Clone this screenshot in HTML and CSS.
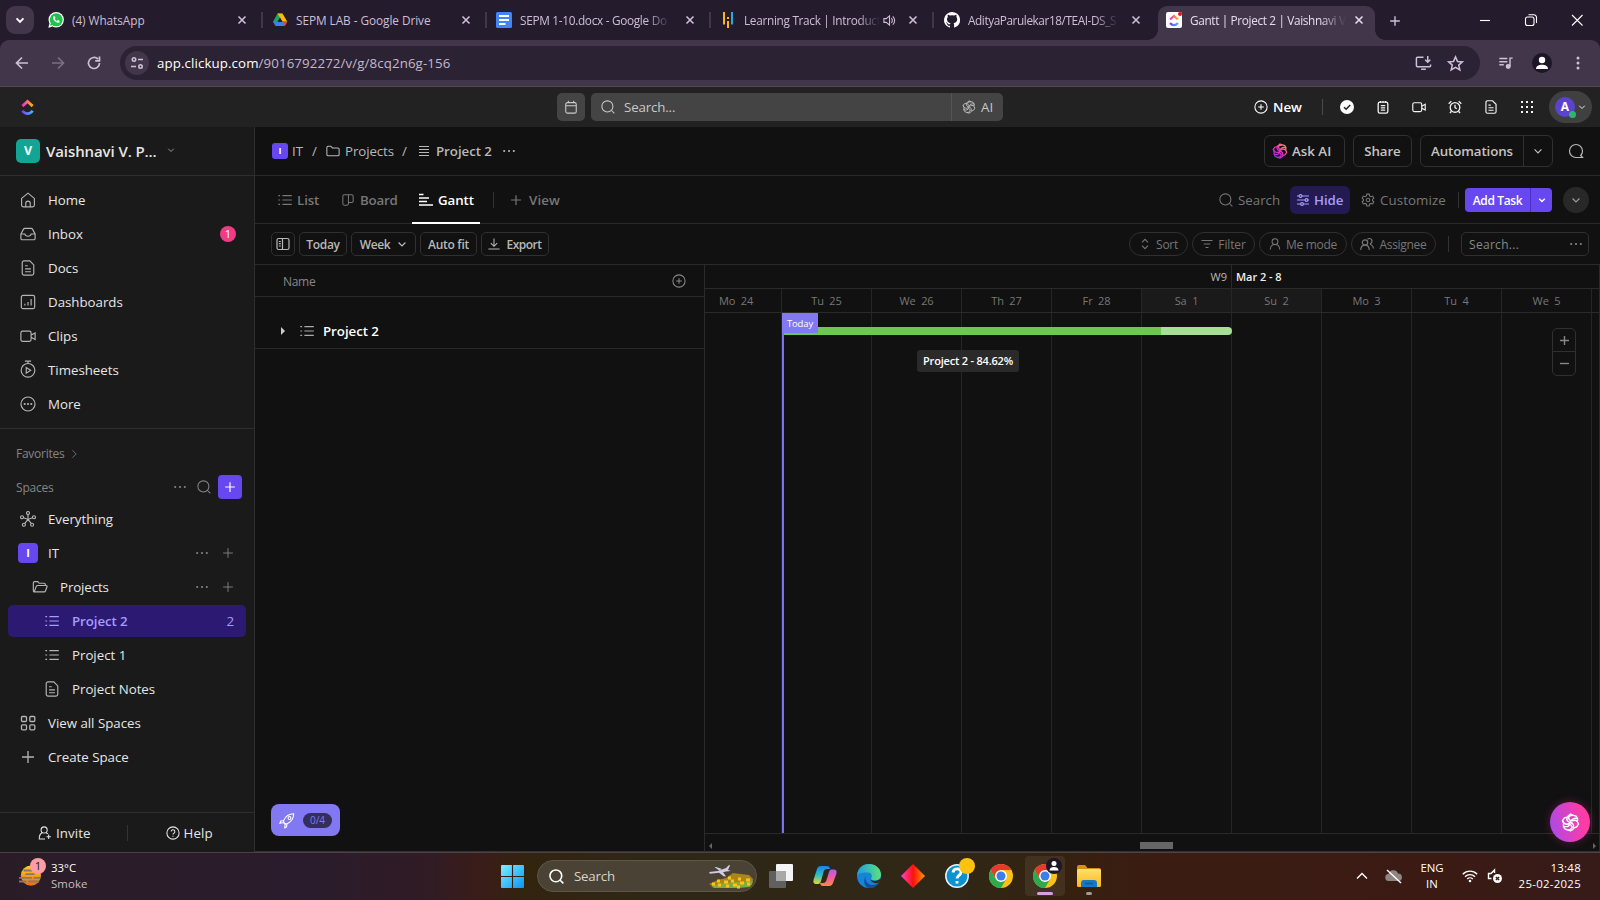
FILE: index.html
```html
<!DOCTYPE html>
<html lang="en">
<head>
<meta charset="utf-8">
<title>Gantt | Project 2</title>
<link rel="stylesheet" href="styles.css">
</head>
<body>
<svg class="sprite" xmlns="http://www.w3.org/2000/svg">
  <defs>
    <linearGradient id="g-up" x1="0" x2="1"><stop offset="0" stop-color="#f02bd6"/><stop offset="1" stop-color="#ffb400"/></linearGradient>
    <linearGradient id="g-down" x1="0" x2="1"><stop offset="0" stop-color="#7b3ff2"/><stop offset="1" stop-color="#42b8ff"/></linearGradient>
    <linearGradient id="g-ai" x1="0" y1="1" x2="1" y2="0"><stop offset="0" stop-color="#8a2bff"/><stop offset=".5" stop-color="#f02bc0"/><stop offset="1" stop-color="#ffa050"/></linearGradient>
    <linearGradient id="g-win" x1="0" y1="0" x2="1" y2="1"><stop offset="0" stop-color="#7df0ff"/><stop offset="1" stop-color="#0a93f5"/></linearGradient>
    <linearGradient id="g-edge" x1="0" y1="0" x2="1" y2="0"><stop offset="0" stop-color="#1b9de2"/><stop offset="1" stop-color="#5fe07a"/></linearGradient>
    <linearGradient id="g-dia" x1="0" x2="1"><stop offset="0" stop-color="#ff45c8"/><stop offset=".5" stop-color="#ff1010"/><stop offset="1" stop-color="#ff9a00"/></linearGradient>
    <linearGradient id="g-cop1" x1="0" y1="0" x2="0" y2="1"><stop offset="0" stop-color="#1c7ff0"/><stop offset=".5" stop-color="#2cc0c8"/><stop offset="1" stop-color="#f2d22e"/></linearGradient>
    <linearGradient id="g-cop2" x1="0" y1="0" x2="0" y2="1"><stop offset="0" stop-color="#b05cf0"/><stop offset=".5" stop-color="#f05ca0"/><stop offset="1" stop-color="#ff8a3c"/></linearGradient>
    <linearGradient id="g-smoke" x1="0" y1="0" x2="0" y2="1"><stop offset="0" stop-color="#ffd21c"/><stop offset="1" stop-color="#f06a10"/></linearGradient>
    <linearGradient id="g-fold" x1="0" y1="0" x2="0" y2="1"><stop offset="0" stop-color="#ffdf6b"/><stop offset="1" stop-color="#f8b81e"/></linearGradient>
  </defs>
  <symbol id="x" viewBox="0 0 16 16"><path d="M4.500 4.500l7 7M11.500 4.500l-7 7"/></symbol>
  <symbol id="plus" viewBox="0 0 16 16"><path d="M8 1.500v13M1.500 8h13"/></symbol>
  <symbol id="minus" viewBox="0 0 16 16"><path d="M1.500 8h13"/></symbol>
  <symbol id="down" viewBox="0 0 16 16"><path d="M2.500 5.500L8 11l5.500-5.500"/></symbol>
  <symbol id="right" viewBox="0 0 16 16"><path d="M5.500 2l6 6-6 6"/></symbol>
  <symbol id="dots" viewBox="0 0 16 16"><g fill="currentColor" stroke="none"><circle cx="2.500" cy="8" r="1.200"/><circle cx="8" cy="8" r="1.200"/><circle cx="13.500" cy="8" r="1.200"/></g></symbol>
  <symbol id="search" viewBox="0 0 16 16"><circle cx="7.300" cy="7.300" r="6.300"/><path d="M12 12l3.300 3.300"/></symbol>
  <symbol id="pluscircle" viewBox="0 0 16 16"><circle cx="8" cy="8" r="7"/><path d="M8 4.800v6.400M4.800 8h6.400"/></symbol>
  <symbol id="home" viewBox="0 0 18 18"><path d="M1.800 7.200L9 1.300l7.200 5.900v7.500a2 2 0 0 1-2 2H3.800a2 2 0 0 1-2-2zM6.500 16.500v-3.800a2.500 2.500 0 0 1 5 0v3.800"/></symbol>
  <symbol id="inbox" viewBox="0 0 18 18"><path d="M1 9l3-5.500a1.500 1.500 0 0 1 1.300-.8h7.400a1.500 1.500 0 0 1 1.300.8L17 9v5a1.500 1.500 0 0 1-1.500 1.500h-13A1.500 1.500 0 0 1 1 14zM1 9h4.500c.3 1.700 1.500 2.500 3.500 2.500s3.200-.8 3.500-2.500H17"/></symbol>
  <symbol id="doc" viewBox="0 0 18 18"><path d="M4.500 1H11l4.500 4.500v9.500a2 2 0 0 1-2 2h-9a2 2 0 0 1-2-2V3a2 2 0 0 1 2-2zM5.700 6.500h3M5.700 10h6.600M5.700 13.200h6.600"/></symbol>
  <symbol id="dash" viewBox="0 0 18 18"><rect x="1.500" y="1.500" width="15" height="15" rx="2"/><path d="M5.500 13v-2M9 13V9M12.500 13V5.500"/></symbol>
  <symbol id="video" viewBox="0 0 18 18"><rect x="1" y="3.500" width="11.500" height="11.500" rx="2"/><path d="M12.500 8l4.500-2.500v7.500l-4.500-2.500"/></symbol>
  <symbol id="timer" viewBox="0 0 18 20"><circle cx="9" cy="11.500" r="7.700"/><path d="M5.500 1.200h7M9 1.200V4M7 8.300v6.400l5-3.200z"/></symbol>
  <symbol id="more" viewBox="0 0 18 18"><circle cx="9" cy="9" r="7.900"/><g fill="currentColor" stroke="none"><circle cx="5.300" cy="9" r="1.200"/><circle cx="9" cy="9" r="1.200"/><circle cx="12.700" cy="9" r="1.200"/></g></symbol>
  <symbol id="every" viewBox="0 0 18 18"><circle cx="9" cy="2.300" r="1.700"/><circle cx="2.300" cy="7" r="1.700"/><circle cx="15.700" cy="7" r="1.700"/><circle cx="4.400" cy="15.500" r="1.700"/><circle cx="13.600" cy="15.500" r="1.700"/><path d="M9 4v5.500M4 7.600l5 1.900 5-1.900M5.400 14L9 9.500l3.600 4.500"/></symbol>
  <symbol id="folder" viewBox="0 0 16 16"><path d="M1 4a1.500 1.500 0 0 1 1.500-1.500h3L7.300 4.500h6.200A1.500 1.500 0 0 1 15 6v6a1.500 1.500 0 0 1-1.500 1.500h-11A1.500 1.500 0 0 1 1 12z"/></symbol>
  <symbol id="folderopen" viewBox="0 0 18 16"><path d="M2.500 13.500A1.500 1.500 0 0 1 1.500 12V3.500A1.500 1.500 0 0 1 3 2h3.500L8 3.800h5.500A1.500 1.500 0 0 1 15 5.300v1M2.500 13.500h11.200a1.500 1.500 0 0 0 1.400-1l1.900-5a1 1 0 0 0-1-1.200H6.200a1.500 1.500 0 0 0-1.400 1z"/></symbol>
  <symbol id="list" viewBox="0 0 16 16"><path d="M5 3h10.800M5 8h10.800M5 13h10.800M.4 3h2M.4 8h2M.4 13h2"/></symbol>
  <symbol id="lines" viewBox="0 0 12 12"><path d="M1 2.500h10M1 5.500h10M1 8.500h10M1 11.500h10"/></symbol>
  <symbol id="grid4" viewBox="0 0 16 16"><rect x="1.500" y="1.500" width="5" height="5" rx="1"/><rect x="9.800" y="1.500" width="5" height="5" rx="1"/><rect x="1.500" y="9.800" width="5" height="5" rx="1"/><rect x="9.800" y="9.800" width="5" height="5" rx="1"/></symbol>
  <symbol id="invite" viewBox="0 0 16 16"><circle cx="7" cy="4.500" r="3.500"/><path d="M5 7.500C2.500 9 1.200 11.500 1.500 14.800H8M9.300 7.700l2 1.300M12.200 9.800v5M9.700 12.300h5"/></symbol>
  <symbol id="help" viewBox="0 0 16 16"><circle cx="8" cy="8" r="7"/><path d="M5.900 6.300a2.100 2.100 0 1 1 3.100 1.900c-.8.400-1 .8-1 1.400M8 11.200v1.200"/></symbol>
  <symbol id="board" viewBox="0 0 14 14"><path d="M2.500 1h9A1.500 1.500 0 0 1 13 2.500v6A1.500 1.500 0 0 1 11.500 10H7.500v1.500A1.500 1.500 0 0 1 6 13H2.500A1.500 1.500 0 0 1 1 11.500v-9A1.500 1.500 0 0 1 2.500 1zM7.500 1v9"/></symbol>
  <symbol id="gantt" viewBox="0 0 14 14"><path d="M0 1.500h4.500M0 5h10M0 8.500h8M0 12h14"/></symbol>
  <symbol id="panel" viewBox="0 0 14 14"><rect x="1" y="1.500" width="12" height="11" rx="1.500"/><path d="M6.500 1.500V12.500M2.800 4.500h2M2.800 6.700h2M2.800 9h2"/></symbol>
  <symbol id="export" viewBox="0 0 14 14"><path d="M7 .5v9M3.300 6L7 9.700 10.700 6M.5 12.800h13"/></symbol>
  <symbol id="sort" viewBox="0 0 14 14"><path d="M3.500 5L7 1.500 10.500 5M3.500 9L7 12.500 10.500 9"/></symbol>
  <symbol id="filter" viewBox="0 0 14 14"><path d="M.500 3h13M3.200 7h7.600M5.300 11h3.400"/></symbol>
  <symbol id="person" viewBox="0 0 14 14"><circle cx="7" cy="4.300" r="3.400"/><path d="M1.500 13.500c.2-3.700 2.200-5.800 5.500-5.800s5.300 2.100 5.500 5.800"/></symbol>
  <symbol id="people" viewBox="0 0 14 14"><circle cx="5" cy="5.500" r="2.700"/><path d="M.7 13c.2-3 1.600-4.800 4.300-4.800S9.100 10 9.300 13M7.500 2.200A2.700 2.700 0 1 1 10 6.800M10 7.500c2 .3 3.200 1.800 3.400 4"/></symbol>
  <symbol id="sliders" viewBox="0 0 14 14"><path d="M1 3h2M6 3h7M1 7h8M12 7h1M1 11h3.500M7.500 11H13"/><circle cx="4.500" cy="3" r="1.400"/><circle cx="10.500" cy="7" r="1.400"/><circle cx="6" cy="11" r="1.400"/></symbol>
  <symbol id="gear" viewBox="0 0 16 16"><path d="M6.600 1.300h2.800l.4 2 1.600.9 1.900-.7 1.400 2.500-1.500 1.300v1.500l1.500 1.300-1.400 2.400-1.900-.6-1.600.9-.4 2H6.600l-.4-2-1.600-.9-1.900.6L1.300 10l1.500-1.200V7.300L1.300 6l1.400-2.500 1.900.7 1.600-.9z"/><circle cx="8" cy="8" r="2"/></symbol>
  <symbol id="chat" viewBox="0 0 16 16"><path d="M14.500 14.500H8A6.500 6.500 0 1 1 14.500 8a6.500 6.500 0 0 1-1.800 4.500z"/></symbol>
  <symbol id="ai" viewBox="0 0 16 16"><path d="M8 1l2.400 1 2.300.6 1.300 2.200-.3 2.400 1 2.100-1.300 2.200-2.200 1-2 1.900L8 15l-2.600-.7-2.200-1L2 11l.3-2.300L1.300 6.300l1.500-2.100 2.400-.7z"/><path d="M10.400 2C6 2 5.300 4.500 8 6.500M5.200 3.500c-1 3 1 4 2.800 4.500 2 .6 3.300 2 2.200 4.500M14 4.800C12 4 8.500 4.300 8 8M1.300 6.300c.8 3 4 4.300 6.700 1.700M5.400 14.300c3.800 0 4.800-2 2.600-4.600M2 11c3 1 5 .6 5.500-2M13.700 7.200c-1.500-1.500-3.400-1.300-4.500-.2"/></symbol>
  <symbol id="cal" viewBox="0 0 16 16"><rect x="2" y="3" width="12" height="12" rx="2"/><path d="M2 6.500h12M5 .8v2.200M11 .8v2.200"/></symbol>
  <symbol id="note" viewBox="0 0 16 16"><rect x="2.500" y="2.500" width="11" height="12.500" rx="2"/><path d="M5 1v2M8 1v2M11 1v2M5.500 6.500h5M5.500 9h5M5.500 11.500h5"/></symbol>
  <symbol id="alarm" viewBox="0 0 16 16"><circle cx="8" cy="8.500" r="5.500"/><path d="M8 5.500v3.200l2 1.300M.8 4.200l3-2.800M15.200 4.200l-3-2.800M4 12.800l-1.800 2M12 12.800l1.800 2"/></symbol>
  <symbol id="logo" viewBox="0 0 14 18"><path d="M1.500 7.500L7 2.500l5.500 5" fill="none" stroke="url(#g-up)" stroke-width="3"/><path d="M1.500 12.500c3 4 8 4 11 0" fill="none" stroke="url(#g-down)" stroke-width="3"/></symbol>
  <symbol id="chrome" viewBox="0 0 24 24"><g stroke="none"><circle cx="12" cy="12" r="12" fill="#fbc116"/><circle cx="12" cy="12" r="6" fill="#fff"/><circle cx="12" cy="12" r="4.500" fill="#3b7de9"/><path d="M12 6h10.400A12 12 0 0 0 12 0 12 12 0 0 0 1.600 6l5.200 9A6 6 0 0 1 12 6z" fill="#e33b2e"/><path d="M1.600 6A12 12 0 0 0 12 24l5.200-9A6 6 0 0 1 6.800 15z" fill="#2da94f"/></g></symbol>
</svg>

<div class="tabs">
  <div class="tabsearch"><svg class="i10 w3"><use href="#down"/></svg></div>
  <div class="tab">
    <svg class="fav" viewBox="0 0 16 16"><circle cx="8.200" cy="7.800" r="7.700" fill="#fff"/><path d="M.3 15.700l1-4 3 3z" fill="#fff"/><circle cx="8.200" cy="7.800" r="6.500" fill="#1fc34a"/><path d="M2.200 13.800l.8-3 2 2z" fill="#1fc34a"/><path d="M5.400 4.500c-1.500 2.500 3 7.500 6 6l.3-1.500-1.800-.9-.9.900C8 8.600 7.200 7.700 6.800 6.900l.7-.9-.7-1.700z" fill="#fff"/></svg>
    <span class="ttl">(4) WhatsApp</span><svg class="tx"><use href="#x"/></svg><i class="sep"></i>
  </div>
  <div class="tab">
    <svg class="fav" viewBox="0 0 16 16"><path d="M5.500 1.500h5L8 5.800 3.700 13.500 1 9.800z" fill="#1ea55a"/><path d="M5.500 1.500h5l4.800 8.200h-4.800z" fill="#fbbc05"/><path d="M1 9.800h14.300L12.600 14H3.500z" fill="#3f7ef0"/><path d="M10.800 9.800h4.500L12.800 14z" fill="#ea4335"/><path d="M8 6l2.200 3.800H5.800z" fill="#241b2d"/></svg>
    <span class="ttl">SEPM LAB - Google Drive</span><svg class="tx"><use href="#x"/></svg><i class="sep"></i>
  </div>
  <div class="tab">
    <svg class="fav" viewBox="0 0 16 16"><rect width="16" height="16" rx="1.500" fill="#4285f4"/><path d="M3 4h10M3 8h10M3 12h6.500" stroke="#fff" stroke-width="1.800"/></svg>
    <span class="ttl fade">SEPM 1-10.docx - Google Do</span><svg class="tx"><use href="#x"/></svg><i class="sep"></i>
  </div>
  <div class="tab">
    <svg class="fav" viewBox="0 0 16 16"><path d="M4 0v12.500M8 9v7" stroke="#fcb614" stroke-width="2"/><path d="M8 5v2" stroke="#fcb614" stroke-width="2"/><path d="M12 0v12.500" stroke="#28a9e0" stroke-width="2"/></svg>
    <span class="ttl fade short">Learning Track | Introduct</span>
    <svg class="spk" viewBox="0 0 14 14"><path d="M1 5h2.500L7 2v10L3.500 9H1zM9 4.500a3.500 3.500 0 0 1 0 5M10.500 2.500a6 6 0 0 1 0 9"/></svg>
    <svg class="tx"><use href="#x"/></svg><i class="sep"></i>
  </div>
  <div class="tab last">
    <svg class="fav" viewBox="0 0 16 16"><path fill="#fff" d="M8 0a8 8 0 0 0-2.500 15.600c.4.100.5-.2.500-.4v-1.500c-2 .4-2.600-.9-2.800-1.500-.1-.3-.5-1-.8-1.200-.3-.1-.7-.5 0-.5s1.100.6 1.300.9c.7 1.200 1.900.9 2.400.7.1-.5.300-.9.500-1.100-1.800-.2-3.600-.9-3.600-4 0-.9.300-1.600.8-2.100 0-.200-.4-1 .1-2.100 0 0 .7-.2 2.200.8a7.500 7.500 0 0 1 4 0c1.500-1 2.200-.8 2.200-.8.400 1.100.2 1.900.1 2.100.5.600.8 1.300.8 2.100 0 3.100-1.900 3.800-3.700 4 .3.200.6.700.6 1.500v2.700c0 .2.100.5.500.4A8 8 0 0 0 8 0z"/></svg>
    <span class="ttl fade">AdityaParulekar18/TEAI-DS_S</span><svg class="tx"><use href="#x"/></svg>
  </div>
  <div class="tab active">
    <span class="favbox"><svg class="favlogo"><use href="#logo"/></svg><i class="reddot"></i></span>
    <span class="ttl fade lit">Gantt | Project 2 | Vaishnavi V</span><svg class="tx"><use href="#x"/></svg>
  </div>
  <svg class="newtab w15" viewBox="0 0 16 16"><path d="M8 2.500v11M2.500 8h11"/></svg>
  <svg class="wc" viewBox="0 0 14 14"><path d="M2 7.500h10"/></svg>
  <svg class="wc" viewBox="0 0 14 14"><rect x="1.500" y="4" width="8.500" height="8.500" rx="2"/><path d="M4.500 1.800H10A2.500 2.500 0 0 1 12.500 4.300V10"/></svg>
  <svg class="wc" viewBox="0 0 14 14"><path d="M2 2l10.500 10.500M12.500 2L2 12.500"/></svg>
</div>

<div class="toolwrap"><div class="tool">
  <svg class="nav" viewBox="0 0 16 16"><path d="M14 8H3M8 2.500L2.500 8 8 13.500"/></svg>
  <svg class="nav dim" viewBox="0 0 16 16"><path d="M2 8h11M8 2.500L13.500 8 8 13.500"/></svg>
  <svg class="nav" viewBox="0 0 16 16"><path d="M13.500 8A5.500 5.500 0 1 1 12 4.200M13.500 1.500v4.300H9.200"/></svg>
  <div class="omni">
    <span class="site"><svg class="i16" viewBox="0 0 16 16"><circle cx="5" cy="4.500" r="1.700"/><path d="M9 4.500h5M2 11.500h5"/><circle cx="11.500" cy="11.500" r="1.700"/></svg></span>
    <span class="url"><em>app.clickup.com</em>/9016792272/v/g/8cq2n6g-156</span>
    <svg class="oi" viewBox="0 0 18 18"><path d="M9 2.500H2.500A1 1 0 0 0 1.500 3.500v8a1 1 0 0 0 1 1h13a1 1 0 0 0 1-1V10M6.500 15.200h5M13.500 1v6.500M10.800 5l2.700 2.700L16.200 5"/></svg>
    <svg class="oi" viewBox="0 0 18 18"><path d="M9 2l2.100 4.800 5.200.5-3.900 3.400 1.200 5.100L9 13.100l-4.600 2.700 1.200-5.100L1.700 7.300l5.200-.5z"/></svg>
  </div>
  <svg class="media" viewBox="0 0 18 18"><path d="M1.500 4h9M1.500 7.500h9M1.500 11h5M13.500 13V3.500h3"/><circle cx="11.500" cy="13" r="2" fill="currentColor"/></svg>
  <span class="prof"><svg viewBox="0 0 20 20"><circle cx="10" cy="7" r="3.200" fill="#fff"/><path d="M4 16c0-3 3-4.300 6-4.300s6 1.300 6 4.300z" fill="#fff"/></svg></span>
  <svg class="kebab" viewBox="0 0 16 16"><g fill="currentColor" stroke="none"><circle cx="8" cy="3" r="1.500"/><circle cx="8" cy="8" r="1.500"/><circle cx="8" cy="13" r="1.500"/></g></svg>
</div></div>

<header class="top">
  <svg class="cu"><use href="#logo"/></svg>
  <span class="calbtn"><svg class="i14"><use href="#cal"/></svg></span>
  <div class="gsearch"><svg class="i14"><use href="#search"/></svg><span class="gs">Search...</span><span class="gai"><svg class="i14 w1"><use href="#ai"/></svg>AI</span></div>
  <div class="new"><svg class="i14"><use href="#pluscircle"/></svg><b>New</b></div>
  <i class="vbar"></i>
  <div class="quick">
    <svg class="i16" viewBox="0 0 16 16"><circle cx="8" cy="8" r="7" fill="#fff" stroke="none"/><path d="M5 8.200l2.200 2.100L11.200 6" stroke="#222"/></svg>
    <svg class="i14"><use href="#note"/></svg><svg class="i14"><use href="#video"/></svg><svg class="i14"><use href="#alarm"/></svg><svg class="i14"><use href="#doc"/></svg>
    <svg class="i14" viewBox="0 0 14 14"><path stroke-width="2.200" stroke-dasharray="2 3" d="M1 2h13M1 7h13M1 12h13"/></svg>
  </div>
  <div class="me"><span class="ava">A<i></i></span><svg class="i8 w2"><use href="#down"/></svg></div>
</header>

<div class="app">
<aside class="side">
  <div class="ws"><span class="wsa">V</span><b>Vaishnavi V. P...</b><svg class="i8 w2"><use href="#down"/></svg></div>
  <nav class="menu">
    <div class="row"><svg><use href="#home"/></svg><span>Home</span></div>
    <div class="row"><svg><use href="#inbox"/></svg><span>Inbox</span><i class="cnt">1</i></div>
    <div class="row"><svg><use href="#doc"/></svg><span>Docs</span></div>
    <div class="row"><svg><use href="#dash"/></svg><span>Dashboards</span></div>
    <div class="row"><svg><use href="#video"/></svg><span>Clips</span></div>
    <div class="row"><svg class="tall"><use href="#timer"/></svg><span>Timesheets</span></div>
    <div class="row"><svg><use href="#more"/></svg><span>More</span></div>
  </nav>
  <div class="fav-h">Favorites<svg class="i10"><use href="#right"/></svg></div>
  <div class="sp-h"><span>Spaces</span><svg class="i14"><use href="#dots"/></svg><svg class="i14"><use href="#search"/></svg><span class="addsp"><svg class="i12 w15"><use href="#plus"/></svg></span></div>
  <nav class="spaces">
    <div class="row"><svg><use href="#every"/></svg><span>Everything</span></div>
    <div class="row"><i class="itb">I</i><span>IT</span><svg class="a i14"><use href="#dots"/></svg><svg class="a i12"><use href="#plus"/></svg></div>
    <div class="row l1"><svg class="fo"><use href="#folderopen"/></svg><span>Projects</span><svg class="a i14"><use href="#dots"/></svg><svg class="a i12"><use href="#plus"/></svg></div>
    <div class="row l2 sel"><svg class="i14"><use href="#list"/></svg><span>Project 2</span><em>2</em></div>
    <div class="row l2"><svg class="i14"><use href="#list"/></svg><span>Project 1</span></div>
    <div class="row l2"><svg class="i16"><use href="#doc"/></svg><span>Project Notes</span></div>
    <div class="row"><svg class="i16 va"><use href="#grid4"/></svg><span>View all Spaces</span></div>
    <div class="row"><svg class="i16 va" viewBox="0 0 16 16"><path d="M8 2v12M2 8h12"/></svg><span>Create Space</span></div>
  </nav>
  <div class="sfoot"><div><svg class="i14"><use href="#invite"/></svg>Invite</div><i></i><div><svg class="i14"><use href="#help"/></svg>Help</div></div>
</aside>

<main class="main">
  <div class="bar crumbs">
    <i class="itb sm">I</i><span class="c-it">IT</span><span class="sl">/</span><svg class="i14 c-f"><use href="#folder"/></svg><span class="c-p">Projects</span><span class="sl sl2">/</span><svg class="c-l"><use href="#lines"/></svg><b class="c-2">Project 2</b><svg class="i14 c-d"><use href="#dots"/></svg>
    <div class="btn ask"><svg class="aic"><use href="#ai"/></svg>Ask AI</div>
    <div class="btn share">Share</div>
    <div class="btn auto"><span>Automations</span><i><svg class="i10"><use href="#down"/></svg></i></div>
    <svg class="i16 chat"><use href="#chat"/></svg>
  </div>
  <div class="bar views">
    <div class="v v1"><svg class="i14"><use href="#list"/></svg>List</div>
    <div class="v v2"><svg class="i12"><use href="#board"/></svg>Board</div>
    <div class="v v3"><svg class="i14"><use href="#gantt"/></svg>Gantt</div>
    <i class="vb"></i>
    <div class="v v4"><svg class="i12"><use href="#plus"/></svg>View</div>
    <div class="r vs"><svg class="i14"><use href="#search"/></svg>Search</div>
    <div class="hide"><svg class="i14"><use href="#sliders"/></svg>Hide</div>
    <div class="r cz"><svg class="i14"><use href="#gear"/></svg>Customize</div>
    <i class="vb2"></i>
    <div class="addt"><span>Add Task</span><i><svg class="i8 w3"><use href="#down"/></svg></i></div>
    <span class="circ"><svg class="i10 w2"><use href="#down"/></svg></span>
  </div>
  <div class="bar filters">
    <div class="fb f1"><svg class="i14"><use href="#panel"/></svg></div><div class="fb f2">Today</div><div class="fb f3">Week<svg class="i10 w2"><use href="#down"/></svg></div><div class="fb f4">Auto fit</div><div class="fb f5"><svg class="i12"><use href="#export"/></svg>Export</div>
    <div class="pill p1"><svg class="i12"><use href="#sort"/></svg>Sort</div><div class="pill p2"><svg class="i12"><use href="#filter"/></svg>Filter</div><div class="pill p3"><svg class="i12"><use href="#person"/></svg>Me mode</div><div class="pill p4"><svg class="i14"><use href="#people"/></svg>Assignee</div>
    <i class="vb3"></i>
    <div class="fs"><span>Search...</span><svg class="i14"><use href="#dots"/></svg></div>
  </div>
  <div class="gantt">
    <div class="left">
      <div class="nh"><span>Name</span><svg class="i14"><use href="#pluscircle"/></svg></div>
      <div class="nr"><i class="tri"></i><svg class="i14"><use href="#list"/></svg><b>Project 2</b></div>
    </div>
    <div class="time">
      <div class="weeks"><span class="wk9">W9</span><span class="wk10">Mar 2 - 8</span></div>
      <div class="days"><span class="d0">Mo&nbsp; 24</span><span>Tu&nbsp; 25</span><span>We&nbsp; 26</span><span>Th&nbsp; 27</span><span>Fr&nbsp; 28</span><span class="we">Sa&nbsp; 1</span><span class="we">Su&nbsp; 2</span><span>Mo&nbsp; 3</span><span>Tu&nbsp; 4</span><span>We&nbsp; 5</span><span class="z"></span></div>
      <div class="cols"><i></i><i></i><i></i><i></i><i></i><i></i><i></i><i></i><i></i><i></i><i class="z"></i>
        <div class="gbar"></div><div class="tline"></div><div class="ttag">Today</div><div class="tip">Project 2 - 84.62%</div>
        <div class="zoomer"><span><svg class="w2"><use href="#plus"/></svg></span><span><svg class="w2"><use href="#minus"/></svg></span></div>
      </div>
      <div class="sb"><i class="al"></i><i class="thumb"></i><i class="ar"></i></div>
    </div>
    <div class="rocket"><svg viewBox="0 0 18 18"><path d="M6 12L5 9.500C7 5 11 1.500 16.500 1.500 16.500 7 13 11 8.500 13zM5.500 9L2 9.500 1 12l4-.8M9 12.700l-.5 3.500L6.500 17.300l.3-4M4.700 11.200l2 2"/><circle cx="11.800" cy="6.200" r="1.600"/></svg><span>0/4</span></div>
    <div class="brain"><svg viewBox="0 0 16 16"><use href="#ai"/></svg></div>
  </div>
</main>
</div>

<footer class="task">
  <div class="wx"><svg viewBox="0 0 24 24"><circle cx="13" cy="11.500" r="11" fill="url(#g-smoke)"/><path class="haze" d="M5 6h10M7 10h10M0 14h14M16 14h7M0 18h8M10 18h12"/></svg><i>1</i></div>
  <div class="wt"><span>33°C</span><span class="g">Smoke</span></div>
  <svg class="start" viewBox="0 0 24 24"><path fill="url(#g-win)" d="M1 0h10.400v11.400H0V1a1 1 0 0 1 1-1zM12.600 0H23a1 1 0 0 1 1 1v10.400H12.600zM0 12.600h11.400V24H1a1 1 0 0 1-1-1zM12.600 12.600H24V23a1 1 0 0 1-1 1H12.600z"/></svg>
  <div class="ts"><svg class="ic"><use href="#search"/></svg><span>Search</span>
    <svg class="pic" viewBox="0 0 46 24"><path d="M1 20l9-4 8-2 7-5 8 1 8 1 4 4-1 6-6 2H6z" fill="#a9861c"/><path d="M3 22l12-3 15-1 15-1-3 6-12 1H6z" fill="#7fae3c"/><path class="fl" d="M4 20h3M9 17h3M10 21h3M16 18h4M18 22h3M23 17h3M25 21h4M30 15h3M32 19h4M38 16h4M39 20h3M29 23h3M20 14h3"/><path d="M1 8l9-1 8-3 3-3 1 .5L20 6l3 1-5 .5-3 .8 3 4-2 .2-5-3.700-9 .9zM8 3l6 2-3 1.500L6.500 3z" fill="#d2cbe4"/></svg></div>
  <div class="apps">
    <svg viewBox="0 0 24 24"><rect x="7" y="0" width="17" height="17" rx="1" fill="#f4f4f4"/><rect y="7" width="17" height="17" rx="1" fill="#606060"/><path d="M7 7h10v10H7z" fill="#a8a8a8"/></svg>
    <svg viewBox="0 0 24 24"><path d="M8 2h6c2 0 2.500 1 3 3h-3c-2 0-3 1-3.500 3L8 17c-.5 2-1.500 3-3 3H3c-2 0-3-1.500-2.500-4L4 5c.5-2 2-3 4-3z" fill="url(#g-cop1)"/><path d="M16 22h-6c-2 0-2.500-1-3-3h3c2 0 3-1 3.500-3L16 8c.5-2 1.500-2.500 3-2.500h2c2 0 3 1.500 2.500 4L20 19c-.5 2-2 3-4 3z" fill="url(#g-cop2)"/></svg>
    <svg viewBox="0 0 24 24"><circle cx="12" cy="12" r="12" fill="#1684d8"/><path d="M0 11C1 3 7 0 12 0c7 0 12 5 12 10.500 0 4-3 6-6.500 6-3 0-4-1.500-3-3 .8-1.200.7-5-4-5C6 8.500 2 9 0 11z" fill="url(#g-edge)"/><path d="M9.500 10c-3 4 0 11 6 11 3 0 5.500-1.500 6.500-2.500C20 22 16 24 12 24 8 23 5 18 9.500 10z" fill="#114f9e"/><path d="M14 13.500c-1.500 2 0 3.300 3.500 3.300 2.500 0 4.500-.8 6.500-2.300-.5 2-1.500 4-3 4.500-4 1-9-2-7-5.500z" fill="#2f2717"/></svg>
    <svg viewBox="0 0 24 24"><path d="M12 0l12 12-12 12L0 12z" fill="url(#g-dia)"/></svg>
    <span class="hp"><svg viewBox="0 0 24 24"><circle cx="12" cy="12" r="11.200" fill="#0a93d0"/><circle class="ring" cx="12" cy="12" r="11.200"/><path class="qm" d="M8 8.500c.5-5 8.500-4.500 8 0-.3 2.800-4 3-4 6M12 17v2.500"/></svg><i></i></span>
    <svg><use href="#chrome"/></svg>
    <span class="act"><svg><use href="#chrome"/></svg><i class="pb"><svg viewBox="0 0 16 16"><circle cx="8" cy="5.500" r="2.500" fill="#fff"/><path d="M3.500 12.500c0-2.500 2-3.500 4.500-3.500s4.500 1 4.500 3.500z" fill="#fff"/></svg></i><i class="ul"></i></span>
    <span class="fx"><svg viewBox="0 0 24 24"><path d="M0 3a2 2 0 0 1 2-2h6l2.500 3H22a2 2 0 0 1 2 2v5H0z" fill="#d89012"/><rect y="5" width="24" height="18" rx="1.500" fill="url(#g-fold)"/><path d="M4 23v-4a3 3 0 0 1 3-3h10a3 3 0 0 1 3 3v4z" fill="#1478c8"/><path d="M8 18.800h8v1.500H8z" fill="#0c5a9c"/></svg><i></i></span>
  </div>
  <div class="tray">
    <svg class="t1" viewBox="0 0 12 12"><path d="M1 8.500L6 3.500l5 5"/></svg>
    <svg class="t2" viewBox="0 0 18 16"><path d="M4 13a3.500 3.500 0 0 1-.5-7A5 5 0 0 1 13 5.500 3.800 3.800 0 0 1 14 13z" fill="#8f8683"/><path d="M2 2l14 13"/></svg>
    <div class="lang"><span>ENG</span><span>IN</span></div>
    <svg class="t3" viewBox="0 0 16 14"><path d="M.8 5.200a10 10 0 0 1 14.400 0M3 7.700a7 7 0 0 1 10 0M5.200 10a4 4 0 0 1 5.600 0"/><circle cx="8" cy="12" r="1.300" fill="#fff"/></svg>
    <svg class="t4" viewBox="0 0 16 16"><path d="M4.500 10.500h-3v-5H4L7.500 2v3"/><circle cx="10.500" cy="10.500" r="4.500" fill="#fff"/><path class="off" d="M8.900 8.900l3.200 3.200M12.100 8.900l-3.200 3.200"/></svg>
    <div class="clock"><span>13:48</span><span>25-02-2025</span></div>
  </div>
</footer>
</body>
</html>
```
FILE: styles.css
```css
* { box-sizing: border-box; }
body { margin: 0; width: 1600px; height: 900px; overflow: hidden; background: #111; font-family: "Open Sans", "Noto Sans", sans-serif; font-size: 13.3px; color: #e6e6e6; white-space: nowrap; }
svg { flex: none; fill: none; stroke: currentColor; stroke-width: 1.2; display: block; overflow: visible; }
i, em { font-style: normal; }
i, b, em, span { flex: none; }
.sprite { position: absolute; width: 0; height: 0; }
.i8 { width: 8px; height: 8px; } .i10 { width: 10px; height: 10px; } .i12 { width: 12px; height: 12px; } .i14 { width: 14px; height: 14px; } .i16 { width: 16px; height: 16px; }
.w1 { stroke-width: 1; } .w15 { stroke-width: 1.6; } .w2 { stroke-width: 2; } .w3 { stroke-width: 3; }

/* browser tabs */
.tabs { display: flex; height: 40px; background: #241b2d; align-items: center; color: #cdbfd6; }
.tabsearch { flex: none; width: 28px; height: 28px; margin: 0 4px 0 6px; border-radius: 9px; background: #42374a; display: flex; align-items: center; justify-content: center; color: #fff; }
.tab { display: flex; align-items: center; width: 224px; height: 34px; padding-left: 10px; flex: none; margin-top: 6px; padding-bottom: 6px; }
.fav { width: 16px; height: 16px; stroke: none; }
.ttl { margin-left: 8px; width: 162px; font-size: 11.8px; letter-spacing: -.05px; }
.fade { width: 151px; margin-right: 11px; letter-spacing: -.3px; -webkit-mask-image: linear-gradient(90deg, #000 84%, transparent); mask-image: linear-gradient(90deg, #000 84%, transparent); }
.short { width: 136px; margin-right: 3px; }
.tx { width: 16px; height: 16px; stroke-width: 1.6; }
.short ~ .tx { margin-left: 9px; }
.spk { width: 13px; height: 13px; }
.sep { width: 2px; height: 16px; background: #42374a; margin-left: 11px; }
.last .fade { margin-right: 9px; letter-spacing: -.42px; }
.active { background: #42374a; border-radius: 9px 9px 0 0; width: 217px; color: #e6dcec; padding-left: 8px; position: relative; }
.active::before, .active::after { content: ""; position: absolute; bottom: 0; width: 10px; height: 10px; }
.active::before { left: -10px; background: radial-gradient(circle at 0 0, transparent 9.500px, #42374a 10px); }
.active::after { right: -10px; background: radial-gradient(circle at 100% 0, transparent 9.500px, #42374a 10px); }
.favbox { width: 16px; height: 16px; background: #fff; border-radius: 2px; position: relative; display: flex; align-items: center; justify-content: center; }
.favlogo { width: 10px; height: 13px; }
.reddot { position: absolute; right: 0; top: 0; width: 4px; height: 4px; border-radius: 50%; background: #f01010; }
.lit { width: 156px; margin-right: 5px; letter-spacing: -.35px; }
.newtab { width: 14px; height: 14px; margin: 1px 76px 0 13px; }
.wc { width: 14px; height: 14px; margin-right: 32px; color: #fff; stroke-width: 1.100; }

/* browser toolbar */
.toolwrap { background: #241b2d; height: 47px; }
.tool { display: flex; align-items: center; height: 47px; background: #42374a; border-radius: 9px 9px 0 0; padding: 0 0 0 14px; border-bottom: 1px solid #524859; color: #cdbfd6; }
.nav { width: 16px; height: 16px; margin-right: 20px; stroke-width: 1.700; }
.dim { color: #7c6f85; }
.omni { margin-left: -2px; width: 1360px; height: 34px; border-radius: 17px; background: #2b2233; display: flex; align-items: center; padding-left: 5px; }
.site { width: 24px; height: 24px; border-radius: 50%; background: #42374a; display: flex; align-items: center; justify-content: center; }
.site svg { stroke-width: 1.600; }
.url { margin-left: 8px; width: 1258px; font-size: 13.3px; letter-spacing: .1px; color: #c4b8cd; }
.url em { color: #fff; }
.oi { width: 17px; height: 17px; margin-right: 15px; stroke-width: 1.600; }
.media { width: 16px; height: 16px; margin-left: 18px; stroke-width: 1.600; }
.prof { width: 20px; height: 20px; border-radius: 50%; background: #1d1528; margin-left: 18px; }
.prof svg { stroke: none; }
.kebab { width: 16px; height: 16px; margin-left: 18px; }

/* app header */
.top { height: 40px; background: #222; display: flex; align-items: center; padding: 0 0 0 21px; }
.cu { width: 13px; height: 17px; }
.calbtn { margin-left: 523px; width: 28px; height: 28px; border-radius: 5px; background: #444; display: flex; align-items: center; justify-content: center; color: #ccc; }
.gsearch { margin-left: 6px; width: 412px; height: 28px; border-radius: 5px; background: #444; display: flex; align-items: center; padding-left: 10px; color: #c8c8c8; }
.gs { margin-left: 9px; width: 327px; letter-spacing: -.15px; }
.gai { border-left: 1px solid #555; height: 28px; display: flex; align-items: center; padding-left: 10px; gap: 5px; }
.new { display: flex; align-items: center; margin-left: 251px; gap: 5px; width: 68px; color: #fff; }
.new b { font-weight: 600; }
.vbar { width: 1px; height: 16px; background: #4a4a4a; }
.quick { display: flex; margin-left: 16px; gap: 22px; align-items: center; color: #f2f2f2; width: 210px; }
.quick svg { stroke-width: 1.5; }
.quick svg:first-child { margin-right: -1px; }
.me { width: 43px; height: 32px; border-radius: 16px; background: #404040; display: flex; align-items: center; padding-left: 6px; gap: 3px; }
.ava { width: 20px; height: 20px; border-radius: 50%; background: #5b43cf; color: #fff; font-weight: 700; font-size: 12px; line-height: 20px; text-align: center; position: relative; }
.ava i { position: absolute; right: -1px; bottom: -1px; width: 7px; height: 7px; border-radius: 50%; background: #2fb573; }

/* sidebar */
.app { display: flex; height: 725px; }
.side { width: 255px; background: #1a1a1a; border-right: 1px solid #2e2e2e; display: flex; flex-direction: column; }
.ws { height: 49px; border-bottom: 1px solid #2e2e2e; display: flex; align-items: center; padding-left: 16px; }
.wsa { width: 24px; height: 24px; border-radius: 5px; background: #12a594; color: #fff; font-weight: 700; line-height: 23px; text-align: center; font-size: 12.500px; }
.ws b { font-weight: 600; font-size: 15px; letter-spacing: -.1px; margin-left: 6px; width: 121px; }
.ws svg { color: #999; margin-bottom: 2px; }
.menu { padding-top: 7px; height: 253px; border-bottom: 1px solid #2e2e2e; }
.row { height: 34px; display: flex; align-items: center; padding-left: 20px; font-weight: 500; position: relative; letter-spacing: -.02px; }
.row > svg:first-child { width: 16px; height: 16px; color: #b4b4b4; margin-right: 12px; stroke-width: 1.300; }
.row > svg.tall:first-child { height: 18px; margin-top: -2px; }
.row > span { flex: 1; }
.cnt { width: 16px; height: 16px; border-radius: 50%; background: #ee3d84; color: #fff; font-size: 11px; line-height: 16px; text-align: center; margin-right: 18px; letter-spacing: 0; }
.fav-h { display: flex; align-items: center; gap: 4px; padding-left: 16px; margin-top: 16px; height: 17px; font-size: 12px; color: #858585; letter-spacing: -.25px; }
.sp-h { display: flex; align-items: center; padding-left: 16px; margin-top: 13px; height: 24px; font-size: 12px; color: #858585; letter-spacing: -.2px; }
.sp-h > span:first-child { width: 157px; padding-top: 1px; }
.sp-h svg + svg { margin-left: 10px; }
.addsp { margin-left: 7px; width: 24px; height: 24px; border-radius: 4px; background: #6647f0; color: #fff; display: flex; align-items: center; justify-content: center; }
.spaces { margin-top: 3px; height: 310px; }
.itb { width: 20px; height: 20px; border-radius: 4px; background: #6647f0; color: #fff; font-weight: 700; font-size: 11px; line-height: 20px; text-align: center; margin: 0 10px 0 -2px; }
.row .a { color: #858585; margin-right: 13px; }
.row .a + .a { margin-right: 20px; }
.l1 { padding-left: 32px; }
.l1 > span { letter-spacing: -.12px; }
.l2 { padding-left: 45px; }
.row.l2 > svg.i14:first-child { width: 14px; height: 14px; margin-right: 13px; }
.row.l2 > svg.i16:first-child { margin: 0 12px 0 -1px; }
.sel { height: 32px; margin: 1px 8px; background: #2c1a72; border-radius: 5px; padding-left: 37px; color: #a59cff; font-weight: 600; letter-spacing: -.08px; }
.sel > svg:first-child { color: #a59cff !important; }
.sel em { margin-right: 12px; font-weight: 400; }
.sfoot { margin-top: auto; height: 40px; border-top: 1px solid #2e2e2e; display: flex; align-items: center; font-weight: 500; padding-top: 1px; }
.sfoot > div { display: flex; align-items: center; gap: 4px; width: 127px; padding-left: 38px; letter-spacing: .1px; }
.sfoot > i { width: 1px; height: 16px; background: #333; }

/* main bars */
.main { width: 1345px; background: #111; display: flex; flex-direction: column; }
.bar { display: flex; align-items: center; border-bottom: 1px solid #2a2a2a; color: #b8b8b8; flex: none; }
.crumbs { height: 49px; padding-left: 17px; }
.itb.sm { width: 16px; height: 16px; line-height: 16px; font-size: 9px; border-radius: 3px; margin: 0 4px 0 0; }
.c-it { width: 20px; } .sl { width: 14px; } .sl2 { width: 16px; } .c-f { margin-right: 5px; } .c-p { width: 57px; letter-spacing: -.1px; } .c-l { width: 12px; height: 12px; margin-right: 6px; stroke-width: 1.1; margin-top: -2px; }
.c-2 { width: 66px; font-weight: 600; letter-spacing: -.05px; }
.btn { height: 32px; border: 1px solid #303030; border-radius: 6px; display: flex; align-items: center; justify-content: center; font-weight: 600; letter-spacing: -.1px; color: #c4c4c4; }
.ask { margin-left: 748px; width: 81px; gap: 4px; justify-content: flex-start; padding-left: 7px; letter-spacing: 0; }
.aic { width: 16px; height: 16px; stroke: url(#g-ai); stroke-width: 1.3; }
.share { margin-left: 8px; width: 59px; }
.auto { margin-left: 8px; width: 133px; justify-content: flex-start; }
.auto span { width: 102px; text-align: center; }
.auto i { border-left: 1px solid #303030; height: 30px; flex: 1; display: flex; align-items: center; justify-content: center; }
.auto svg { stroke-width: 1.800; }
.chat { margin-left: 15px; }
.views { height: 48px; color: #777; font-weight: 600; letter-spacing: -.1px; padding-left: 23px; }
.v, .r { display: flex; align-items: center; gap: 5px; height: 47px; flex: none; }
.v1 { width: 64px; } .v2 { width: 70px; gap: 6px; } .v3 { width: 68px; padding-left: 7px; color: #fff; position: relative; }
.v3::after { content: ""; position: absolute; left: 0; right: 0; bottom: -1px; height: 2px; background: #fff; }
.v2 { letter-spacing: -.2px; }
.v3 svg { stroke-width: 1.4; }
.vb { width: 1px; height: 16px; background: #333; margin: 0 16px 0 13px; }
.v4 { gap: 7px; width: 709px; font-weight: 600; letter-spacing: .1px; }
.v4 svg { stroke-width: 1.600; }
.vs { width: 71px; font-weight: 500; gap: 5px; letter-spacing: 0; }
.hide { width: 60px; height: 28px; border-radius: 6px; background: #231a52; color: #a59cff; display: flex; align-items: center; padding-left: 6px; gap: 4px; font-weight: 600; }
.cz { margin-left: 11px; width: 97px; font-weight: 500; letter-spacing: .1px; }
.vb2 { width: 1px; height: 16px; background: #333; }
.addt { margin-left: 6px; width: 87px; height: 24px; background: #6647f0; border-radius: 4px; color: #fff; display: flex; align-items: center; font-size: 12px; letter-spacing: -.35px; }
.addt span { width: 65px; text-align: center; padding-top: 1px; }
.addt i { border-left: 1px solid #4b32c4; height: 24px; flex: 1; display: flex; align-items: center; justify-content: center; }
.circ { margin-left: 11px; width: 26px; height: 26px; border-radius: 50%; background: #282828; display: flex; align-items: center; justify-content: center; color: #999; }
.filters { height: 41px; padding-left: 16px; font-size: 12px; font-weight: 600; letter-spacing: -.3px; }
.fb, .pill, .fs { height: 24px; border: 1px solid #303030; border-radius: 5px; display: flex; align-items: center; justify-content: center; margin-right: 4px; flex: none; }
.f1 { width: 24px; } .f2 { width: 48px; } .f3 { width: 65px; gap: 7px; } .f4 { width: 57px; } .f5 { width: 68px; gap: 6px; }
.f3 { letter-spacing: -.4px; } .f5 { letter-spacing: -.5px; }
.pill { border-radius: 12px; color: #777; font-weight: 500; gap: 5px; }
.p1 { margin-left: 576px; width: 59px; } .p2 { width: 63px; letter-spacing: -.15px; } .p3 { width: 88px; } .p4 { width: 85px; }
.vb3 { width: 1px; height: 16px; background: #333; margin-left: 8px; }
.fs { margin: 0 0 0 12px; width: 128px; font-weight: 400; color: #888; justify-content: flex-start; padding-left: 7px; letter-spacing: .3px; }
.fs span { width: 100px; }

/* gantt */
.gantt { flex: 1; display: flex; position: relative; border-bottom: 1px solid #333; min-height: 0; }
.left { width: 450px; border-right: 1px solid #2a2a2a; }
.nh { height: 32px; border-bottom: 1px solid #2a2a2a; display: flex; align-items: center; padding-left: 28px; color: #888; font-size: 12px; letter-spacing: -.3px; }
.nh span { width: 389px; padding-top: 2px; }
.nr { height: 52px; border-bottom: 1px solid #2a2a2a; display: flex; align-items: center; padding: 16px 0 0 26px; color: #aaa; }
.tri { border-left: 4px solid #ccc; border-top: 4px solid transparent; border-bottom: 4px solid transparent; margin-right: 15px; }
.nr b { font-weight: 600; color: #fff; margin-left: 9px; letter-spacing: -.05px; }
.time { width: 895px; border-right: 1px solid #2a2a2a; font-size: 11px; color: #777; }
.weeks { display: flex; height: 24px; border-bottom: 1px solid #2a2a2a; line-height: 23px; }
.wk9 { width: 527px; border-right: 1px solid #2a2a2a; text-align: right; padding-right: 4px; color: #bbb; font-weight: 500; }
.wk10 { padding-left: 4px; color: #eee; font-weight: 600; letter-spacing: -.05px; }
.days, .cols { display: grid; grid-template-columns: 77px repeat(9, 90px) 7px; }
.days { height: 24px; border-bottom: 1px solid #2a2a2a; line-height: 23px; text-align: center; letter-spacing: -.1px; }
.days span, .cols > i { border-right: 1px solid #262626; }
.days .z, .cols > .z { border: 0; }
.days .d0 { padding-right: 14px; }
.days .we { background: #1a1a1a; }
.cols { height: 521px; border-bottom: 1px solid #2a2a2a; position: relative; }
.gbar { position: absolute; left: 79px; top: 14px; width: 448px; height: 8px; border-radius: 0 4px 4px 0; background: linear-gradient(90deg, #6bc950 377px, #a6de95 377px); }
.tline { position: absolute; left: 77px; top: 0; width: 2px; height: 520px; background: #7b71ee; }
.ttag { position: absolute; left: 77px; top: 0; width: 36px; height: 20px; background: #8278f2; color: #fff; font-size: 9.500px; line-height: 21px; text-align: center; letter-spacing: -.15px; }
.tip { position: absolute; left: 212px; top: 37px; width: 102px; height: 22px; border-radius: 3px; background: #2a2a2a; color: #fff; font-size: 11px; font-weight: 600; letter-spacing: -.2px; line-height: 22px; text-align: center; }
.zoomer { position: absolute; left: 847px; top: 15px; width: 24px; height: 48px; border: 1px solid #303030; border-radius: 5px; color: #888; background: #111; }
.zoomer span { height: 22px; display: flex; align-items: center; justify-content: center; }
.zoomer span + span { border-top: 1px solid #303030; height: 24px; }
.zoomer svg { width: 11px; height: 11px; }
.sb { height: 17px; display: flex; align-items: center; padding: 6px 3px 0 4px; }
.al, .ar { border-top: 3px solid transparent; border-bottom: 3px solid transparent; }
.al { border-right: 3px solid #666; margin-right: 428px; } .ar { border-left: 3px solid #666; margin-left: auto; }
.thumb { width: 33px; height: 7px; background: #666; }
.rocket { position: absolute; left: 16px; bottom: 15px; width: 69px; height: 32px; border-radius: 8px; background: #8278f2; display: flex; align-items: center; padding-left: 8px; gap: 8px; color: #fff; }
.rocket svg { width: 16px; height: 17px; }
.rocket span { width: 29px; height: 15px; border-radius: 8px; background: #332f5a; color: #8278f2; font-size: 10px; line-height: 15px; text-align: center; }
.brain { position: absolute; left: 1295px; bottom: 9px; width: 40px; height: 40px; border-radius: 50%; background: linear-gradient(80deg, #a64bea, #ff3ba6 80%); box-shadow: 0 0 10px rgba(240, 50, 160, .3); display: flex; align-items: center; justify-content: center; color: #fff; }
.brain svg { width: 19px; height: 19px; }

/* taskbar */
.task { height: 48px; border-top: 1px solid #4b4146; background: linear-gradient(90deg, #2a1c27 0, #2a1c2c 19%, #311b24 27%, #3a1d17 30.500%, #32240f 33%, #2f2715 40%, #302716 60%, #35210f 66%, #3b1c12 72%, #3a1a13 90%, #361b1a 100%); display: flex; align-items: center; font-size: 11.4px; color: #fff; padding-bottom: 1px; }
.task svg { stroke: none; }
.wx { margin-left: 19px; width: 32px; position: relative; }
.wx svg { width: 22px; height: 22px; }
.haze { stroke: #85796a; stroke-width: 2; }
.wx i { position: absolute; left: 11px; top: -7px; width: 16px; height: 16px; border-radius: 50%; background: #ff9ca4; color: #222; line-height: 16px; text-align: center; }
.wt, .lang, .clock { display: flex; flex-direction: column; line-height: 16px; margin-top: -1px; }
.wt { width: 450px; }
.g { color: #c5bfc4; letter-spacing: .1px; }
.start { width: 23px; height: 23px; margin-right: 13px; }
.ts { width: 220px; height: 32px; border-radius: 16px; background: #4a4234; border: 1px solid #5c5548; display: flex; align-items: center; padding-left: 11px; font-size: 13.3px; color: #d8d4cc; }
.task .ts .ic { width: 15px; height: 15px; stroke: #fff; stroke-width: 1.700; }
.ts span { margin-left: 10px; width: 134px; letter-spacing: -.2px; }
.ts .pic { width: 46px; height: 24px; }
.fl { stroke: #ffc21a; stroke-width: 3; }
.apps { display: flex; margin-left: 12px; gap: 20px; width: 332px; align-items: center; }
.apps svg { width: 24px; height: 24px; }
.hp { position: relative; }
.ring { stroke: #e8f4fa; stroke-width: 1.500; } .qm { stroke: #fff; stroke-width: 2.800; }
.hp i { position: absolute; left: 14px; top: -6px; width: 16px; height: 16px; border-radius: 50%; background: #ffc20e; }
.act { position: relative; margin: 0 -8px; width: 40px; height: 40px; border-radius: 4px; background: rgba(255, 255, 255, .07); padding: 8px; }
.pb { position: absolute; left: 21px; top: 2px; width: 16px; height: 16px; border-radius: 50%; background: #1d1528; }
.apps .pb svg { width: 16px; height: 16px; }
.ul { position: absolute; left: 12px; bottom: 1px; width: 16px; height: 3px; border-radius: 2px; background: #dd9cea; }
.fx { position: relative; }
.fx i { position: absolute; left: 9px; bottom: -7px; width: 6px; height: 3px; border-radius: 2px; background: #a09a98; }
.tray { display: flex; align-items: center; margin-left: 255px; }
.task .tray svg { stroke: #fff; stroke-width: 1.400; }
.t1 { width: 12px; height: 12px; } .t2 { width: 18px; height: 16px; margin-left: 17px; }
.tray .t2 path:first-child, .tray circle { stroke: none; }
.tray .off { stroke: #3a1c14; }
.lang { width: 30px; margin-left: 14px; text-align: center; }
.t3 { width: 16px; height: 14px; margin-left: 15px; } .t4 { width: 16px; height: 16px; margin-left: 9px; }
.clock { text-align: right; width: 78px; letter-spacing: .3px; }
```
